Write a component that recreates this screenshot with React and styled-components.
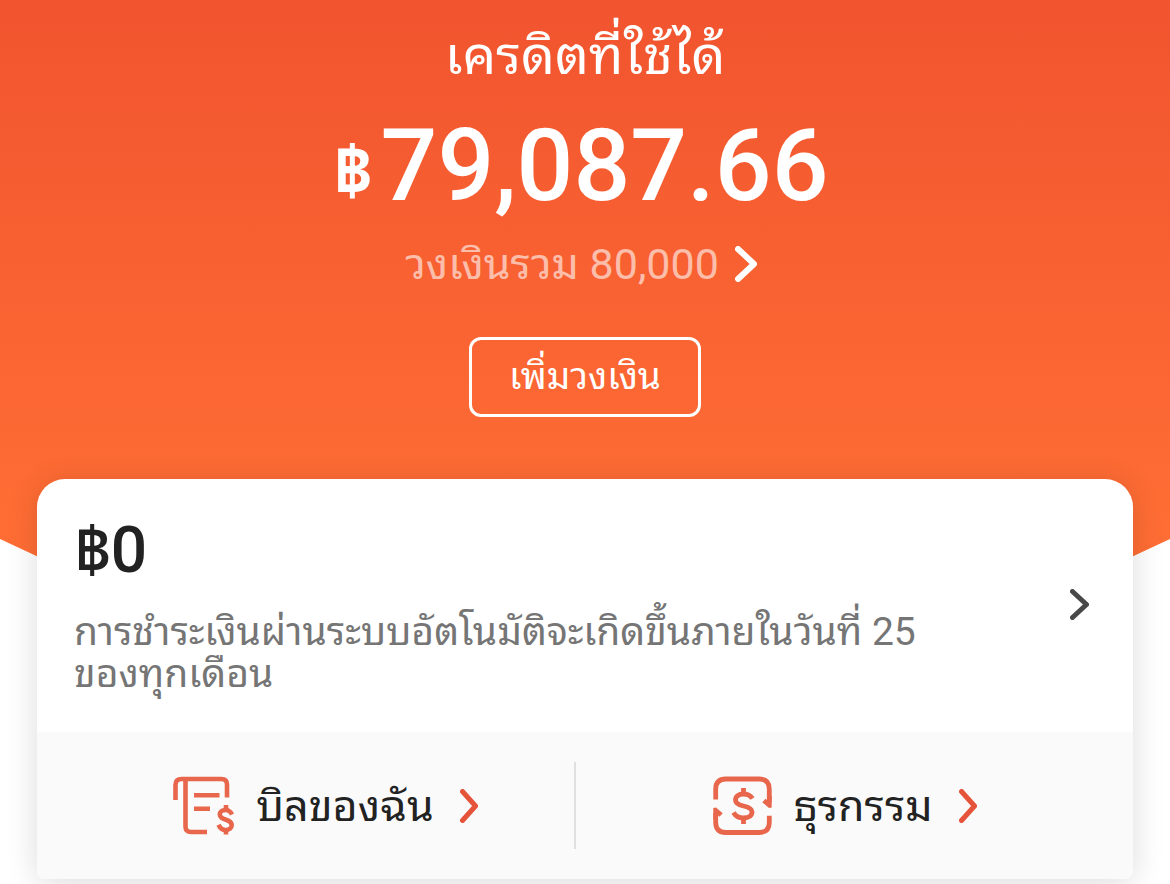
import React from 'react';
import styled, {createGlobalStyle} from 'styled-components';

const GlobalStyle = createGlobalStyle`
  * {
    box-sizing: border-box;
  }

  body {
    margin: 0;
    background: #fff;
    color: #222;
    font-family: Roboto, 'Noto Sans Thai Looped', Loma, 'Noto Looped Thai', Thonburi, Garuda, Waree, 'Noto Sans', sans-serif;
  }
`;

const Page = styled.main`
  overflow: hidden;
  padding-bottom: 5px;
`;

// the lower corners slope inwards and run under the card
const Hero = styled.header`
  display: flex;
  flex-direction: column;
  align-items: center;
  padding: 24px 24px 150px;
  color: #fff;
  background: linear-gradient(#f1542f, #ff6d34 92%);
  clip-path: polygon(
    0 0,
    100% 0,
    100% calc(100% - 28px),
    calc(100% - 60px) 100%,
    60px 100%,
    0 calc(100% - 28px)
  );
`;

const Title = styled.h1`
  margin: 0;
  font-size: 53px;
  font-weight: 400;
  line-height: 64px;
`;

const Amount = styled.p`
  display: flex;
  align-items: center;
  margin: 18px 0 0;
  padding-right: 8px;
  font-size: 100px;
  font-weight: 500;
  line-height: 120px;
`;

const Currency = styled.span`
  margin: 12px 8px 0 0;
  font-size: 68px;
  font-weight: 700;
  line-height: 72px;
`;

const LimitLink = styled.a`
  display: flex;
  align-items: center;
  gap: 16px;
  margin-top: 10px;
  padding-right: 8px;
  color: rgba(255, 255, 255, 0.6);
  font-size: 43px;
  line-height: 56px;
  text-decoration: none;
`;

const RaiseButton = styled.button`
  min-width: 232px;
  height: 80px;
  margin-top: 45px;
  padding: 0 32px;
  border: 3px solid #fff;
  border-radius: 12px;
  background: transparent;
  color: #fff;
  font-family: inherit;
  font-size: 37px;
  line-height: 44px;
  cursor: pointer;
`;

const Card = styled.section`
  position: relative;
  margin: -88px 37px 0;
  border-radius: 28px 28px 8px 8px;
  background: #fff;
  box-shadow: 0 4px 32px rgba(0, 0, 0, 0.14);
  overflow: hidden;
`;

const Payment = styled.a`
  display: flex;
  align-items: center;
  justify-content: space-between;
  padding: 34px 44px 37px 37px;
  color: inherit;
  text-decoration: none;
`;

const Due = styled.p`
  margin: 0;
  font-size: 64px;
  font-weight: 500;
  line-height: 76px;
`;

const Note = styled.p`
  max-width: 860px;
  margin: 22px 0 0;
  color: #757575;
  font-size: 39px;
  line-height: 42px;
`;

const Links = styled.nav`
  display: grid;
  grid-template-columns: 49% 1fr;
  padding: 30px 0;
  background: #fafafa;
`;

const LinkItem = styled.a`
  display: flex;
  align-items: center;
  justify-content: center;
  height: 87px;
  padding-left: 40px;
  color: #222;
  font-size: 43px;
  line-height: 56px;
  text-decoration: none;

  & + & {
    padding: 0 20px 0 0;
    border-left: 2px solid #e0e0e0;
  }
`;

const LinkLabel = styled.span`
  margin: 0 26px 0 21px;
`;

const Chevron = ({width, height, color, stroke}) => (
    <svg width={width} height={height} viewBox={`0 0 ${width} ${height}`} fill="none" aria-hidden="true">
        <path
            d={`M${stroke / 2} ${stroke / 2}L${width - stroke / 2} ${height / 2}L${stroke / 2} ${height - stroke / 2}`}
            stroke={color}
            strokeWidth={stroke}
            strokeLinecap="round"
            strokeLinejoin="round"
        />
    </svg>
);

const BillIcon = () => (
    <svg width="62" height="60" viewBox="0 0 62 60" fill="none" stroke="#e8664b" strokeWidth="4.6" aria-hidden="true">
        <path d="M2.5 24V9Q2.5 3 8.5 3H48.500Q54 3 54 8.500V21.500"/>
        <path d="M12.500 3V50.500Q12.500 56 18 56H34"/>
        <path d="M21 19.300H46.500M21 32.800H37"/>
        <path d="M59 38.500C57.500 35.500 55.500 34 52.500 34C49 34 46.800 35.900 46.800 38.500C46.800 41.500 49.500 42.500 53 43.700C57 45 58.700 46.500 58.700 49.300C58.700 52.300 56 54 52.800 54C49.500 54 47 52 45.500 48.700"/>
        <path d="M53 29V34.500M53 53.500V58.500"/>
    </svg>
);

const TransactionIcon = () => (
    <svg width="60" height="60" viewBox="0 0 60 60" fill="none" stroke="#e8664b" strokeWidth="4.8" aria-hidden="true">
        <path d="M2.700 23.500V13Q2.700 3 12.700 3H46.300Q56.300 3 56.300 13V26"/>
        <path d="M56.300 39.700V46.500Q56.300 56.500 46.300 56.500H12.700Q2.700 56.500 2.700 46.500V37"/>
        <path d="M49.300 26.300L52.500 22.800L54.500 24.500V20H58.700V31.500L56 32ZM9.700 37.300L6.500 40.800L4.500 39.100V43.600H.3V32.100L3 31.600Z" fill="#e8664b" stroke="none"/>
        <path d="M39.500 22.500C37.500 19.500 35 18 30.500 18C25.500 18 22.500 20.500 22.500 24C22.500 27.500 25 28.800 30.500 30C36 31.200 39 32.500 39 36C39 39.500 36 42 30.500 42C25.500 42 22.500 40 20.500 36.500"/>
        <path d="M30.500 12V18.500M30.500 41.500V48"/>
    </svg>
);

const App = () => {
    return (
        <>
            <GlobalStyle/>
            <Page lang="th">
                <Hero>
                    <Title>เครดิตที่ใช้ได้</Title>
                    <Amount>
                        <Currency>฿</Currency>
                        79,087.66
                    </Amount>
                    <LimitLink href="#limit">
                        วงเงินรวม 80,000
                        <Chevron width={22} height={36} color="#fff" stroke={6}/>
                    </LimitLink>
                    <RaiseButton type="button">เพิ่มวงเงิน</RaiseButton>
                </Hero>
                <Card>
                    <Payment href="#payment">
                        <div>
                            <Due>฿0</Due>
                            <Note>การชำระเงินผ่านระบบอัตโนมัติจะเกิดขึ้นภายในวันที่ 25 ของทุกเดือน</Note>
                        </div>
                        <Chevron width={19} height={31} color="#484848" stroke={5}/>
                    </Payment>
                    <Links>
                        <LinkItem href="#bills">
                            <BillIcon/>
                            <LinkLabel>บิลของฉัน</LinkLabel>
                            <Chevron width={18} height={34} color="#e5533a" stroke={5}/>
                        </LinkItem>
                        <LinkItem href="#transactions">
                            <TransactionIcon/>
                            <LinkLabel>ธุรกรรม</LinkLabel>
                            <Chevron width={18} height={34} color="#e5533a" stroke={5}/>
                        </LinkItem>
                    </Links>
                </Card>
            </Page>
        </>
    );
};

export default App;
